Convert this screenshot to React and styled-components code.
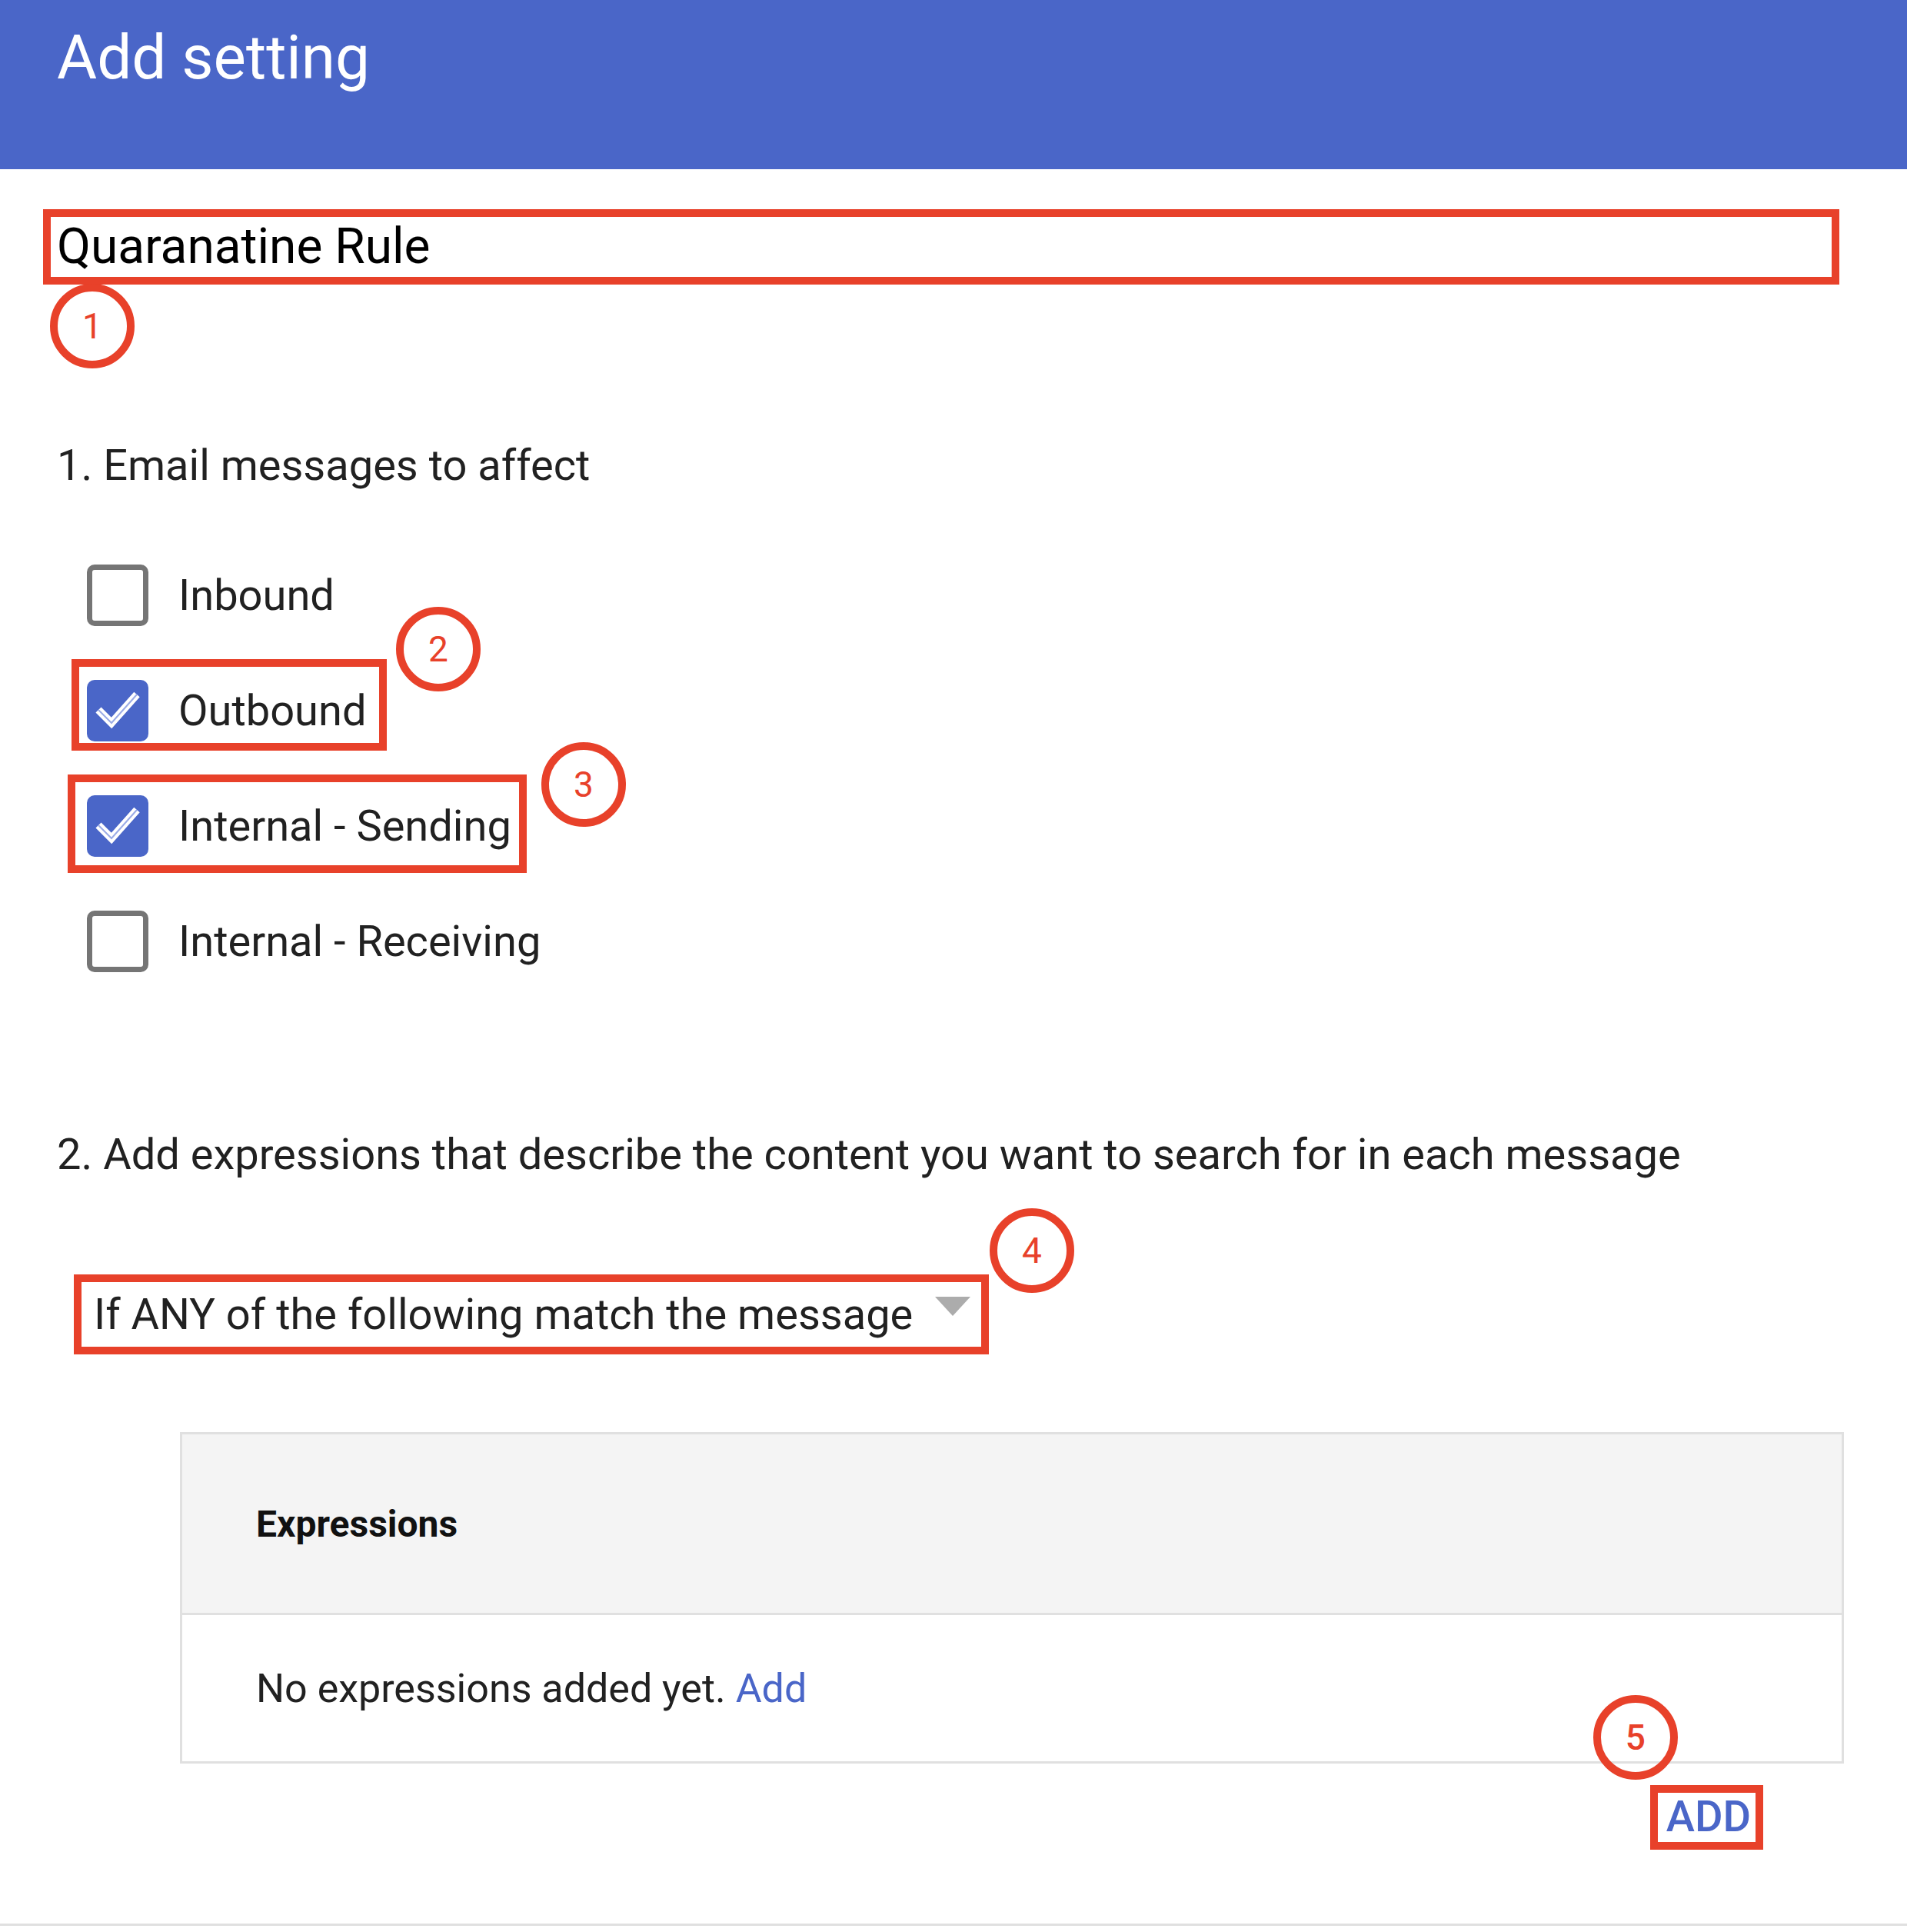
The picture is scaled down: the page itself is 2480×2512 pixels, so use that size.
import React from 'react';
import styled, { createGlobalStyle } from 'styled-components';

const blue = '#4a66c8';
const red = '#e8412a';

const GlobalStyle = createGlobalStyle`
  body {
    margin: 0;
    background: #fff;
    font-family: Roboto, 'Liberation Sans', sans-serif;
    color: #212121;
  }
`;

const Header = styled.header`
  height: 220px;
  box-sizing: border-box;
  padding: 35px 74px 0;
  background: ${blue};
`;

const Title = styled.h1`
  margin: 0;
  font-size: 80px;
  line-height: 1;
  font-weight: 400;
  color: #fff;
`;

const Main = styled.main`
  padding: 52px 88px 0 56px;
`;

const Anchor = styled.div`
  position: relative;
`;

const NameField = styled.div`
  height: 98px;
  box-sizing: border-box;
  border: 10px solid ${red};
  padding-left: 8px;
  font-size: 64px;
  line-height: 78px;
  color: #000;
`;

// numbered callout drawn over the form
const Marker = styled.div`
  position: absolute;
  left: ${(p) => p.x}px;
  top: ${(p) => p.y}px;
  width: 110px;
  height: 110px;
  box-sizing: border-box;
  border: 10px solid ${red};
  border-radius: 50%;
  display: flex;
  align-items: center;
  justify-content: center;
  font-size: 46px;
  line-height: 1;
  color: ${red};
`;

// red highlight frame drawn over the form
const Frame = styled.div`
  position: absolute;
  left: ${(p) => p.l}px;
  top: ${(p) => p.t}px;
  right: ${(p) => p.r}px;
  bottom: ${(p) => p.b}px;
  border: 10px solid ${red};
  pointer-events: none;
`;

const SectionTitle = styled.h2`
  margin: ${(p) => p.top}px 0 0 18px;
  font-size: 56px;
  line-height: 1;
  font-weight: 400;
  color: #212121;
`;

const CheckList = styled.div`
  display: flex;
  flex-direction: column;
  gap: 70px;
  margin-top: 101px;
  padding-left: 57px;
`;

const CheckRow = styled.label`
  position: relative;
  display: flex;
  align-items: center;
  gap: 39px;
  height: 80px;
  align-self: flex-start;
  font-size: 56px;
  line-height: 1;
  color: #212121;
`;

const Box = styled.span`
  width: 80px;
  height: 80px;
  box-sizing: border-box;
  border-radius: 10px;
  border: ${(p) => (p.checked ? 'none' : '7px solid #757575')};
  background: ${(p) => (p.checked ? blue : '#fff')};
  display: flex;
  flex-shrink: 0;
`;

const Select = styled.div`
  position: relative;
  display: inline-flex;
  align-items: center;
  gap: 29px;
  height: 80px;
  margin: 140px 0 0 66px;
  font-size: 56px;
  line-height: 1;
  color: #212121;
`;

const Arrow = styled.span`
  width: 0;
  height: 0;
  border-left: 23px solid transparent;
  border-right: 23px solid transparent;
  border-top: 25px solid #acacac;
  margin-top: -22px;
`;

const Table = styled.div`
  margin: 113px -6px 0 178px;
  border: 3px solid #e0e0e0;
`;

const HeadRow = styled.div`
  height: 232px;
  display: flex;
  align-items: center;
  padding-left: 96px;
  background: #f4f4f4;
  border-bottom: 3px solid #e0e0e0;
  font-size: 48px;
  font-weight: 700;
  color: #111;
`;

const BodyRow = styled.div`
  height: 190px;
  display: flex;
  align-items: center;
  padding-left: 96px;
  font-size: 52px;
  color: #212121;
`;

const Link = styled.span`
  color: ${blue};
  margin-left: 13px;
`;

const Actions = styled.div`
  display: flex;
  justify-content: flex-end;
  margin: 41px 115px 0 0;
`;

const AddButton = styled.span`
  position: relative;
  font-size: 56px;
  line-height: 1;
  font-weight: 500;
  color: ${blue};
`;

const Rule = styled.div`
  height: 3px;
  background: #e0e0e0;
  margin: 111px -88px 0 -56px;
`;

const Check = () => (
  <svg width="80" height="80" viewBox="0 0 80 80">
    <polyline points="15,39 32,56 65,19" fill="none" stroke="#fff" strokeWidth="10" />
    <polyline points="15,39 32,56 65,19" fill="none" stroke="#9aabe6" strokeWidth="2" />
  </svg>
);

const options = [
  { label: 'Inbound', checked: false },
  { label: 'Outbound', checked: true, num: 2, frame: { l: -20, t: -27, r: -27, b: -12 }, marker: { x: 402, y: -95 } },
  { label: 'Internal - Sending', checked: true, num: 3, frame: { l: -25, t: -27, r: -20, b: -21 }, marker: { x: 591, y: -69 } },
  { label: 'Internal - Receiving', checked: false },
];

const App = () => (
  <>
    <GlobalStyle />
    <Header>
      <Title>Add setting</Title>
    </Header>
    <Main>
      <Anchor>
        <NameField>Quaranatine Rule</NameField>
        <Marker x={9} y={97}>1</Marker>
      </Anchor>

      <SectionTitle top={207}>1. Email messages to affect</SectionTitle>
      <CheckList>
        {options.map((o) => (
          <CheckRow key={o.label}>
            <Box checked={o.checked}>{o.checked && <Check />}</Box>
            {o.label}
            {o.frame && <Frame {...o.frame} />}
            {o.marker && (
              <Marker x={o.marker.x} y={o.marker.y}>
                {o.num}
              </Marker>
            )}
          </CheckRow>
        ))}
      </CheckList>

      <SectionTitle top={209}>
        2. Add expressions that describe the content you want to search for in each message
      </SectionTitle>
      <Select>
        If ANY of the following match the message
        <Arrow />
        <Frame l={-26} t={-12} r={-24} b={-12} />
        <Marker x={1165} y={-98}>4</Marker>
      </Select>

      <Table>
        <HeadRow>Expressions</HeadRow>
        <BodyRow>
          No expressions added yet.<Link>Add</Link>
        </BodyRow>
      </Table>

      <Actions>
        <AddButton>
          ADD
          <Frame l={-21} t={-13} r={-16} b={-15} />
          <Marker x={-95} y={-130}>5</Marker>
        </AddButton>
      </Actions>
      <Rule />
    </Main>
  </>
);

export default App;
